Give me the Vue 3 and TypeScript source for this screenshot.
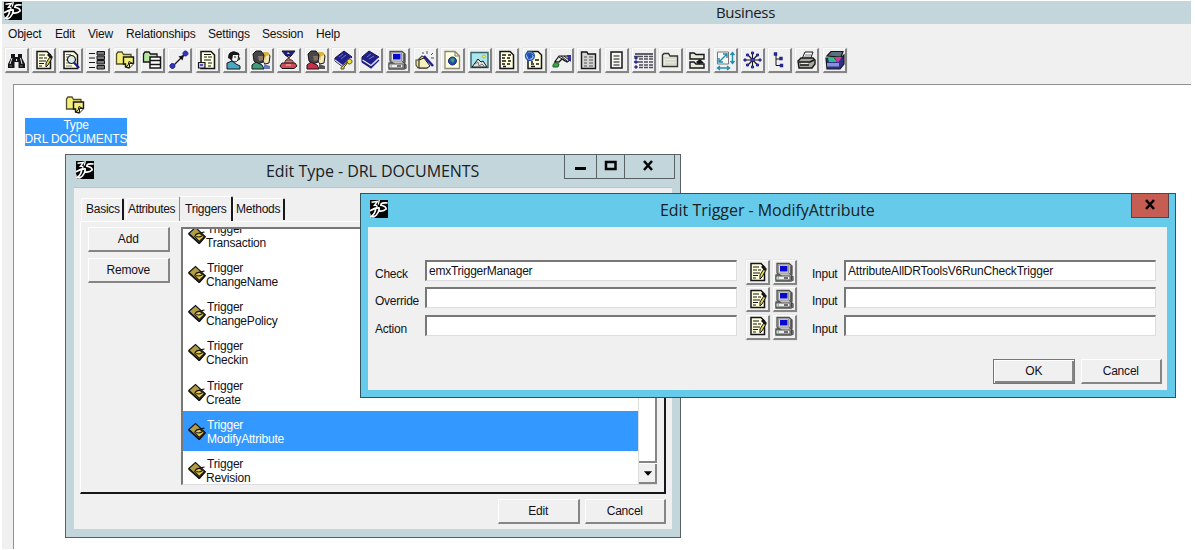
<script setup lang="ts">
import { h } from 'vue'

type Layer = [d: string, fill: string, stroke?: string, width?: number]

const ink = '#16161a'
const cream = '#ffffdc'
const yellow = '#f4ef7a'
const navy = '#20208c'

const page: Layer = ['M5 3.500H15L18.500 7V20.500H5Z', cream, ink, 1.5]

const glyphs: Record<string, Layer[]> = {
  logo: [
    ['M0 0H24V24H0Z', '#050505'],
    ['M2 3L10 2L6 7Q11 6.500 8.500 10.500L4 12', 'none', '#fff', 1.8],
    ['M0 14.500Q7 10 12 10.500Q13 15 8.500 20Q5 23.500 2 21.500Q7 18 7.500 12', 'none', '#fff', 2.3],
    ['M23.500 4Q14 3 14.500 7Q22 8.500 21.500 12Q18 15.500 12 14.500', 'none', '#fff', 2.3],
    ['M12.500 0L11 6M0 22.500H6M0 18V24', 'none', '#fff', 1.6],
  ],
  trigger: [
    ['M1 10L10 2L23 14L15 23Z', '#b39d42', ink, 1.6],
    ['M1 10.500L15 23L23 14', 'none', ink, 2.4],
    ['M9 14Q11 9 16 10L22 14L15 20.500Z', '#e6cb42', ink, 1.4],
    ['M11 14Q15 15.500 19 13M15 9.500L22 8', 'none', ink, 1.4],
  ],
  find: [
    ['M6 6H10V9H13V6H17V10L20 16V20H13.500V14H9.500V20H3V16L6 10Z', ink],
    ['M7 10L5 16M15.500 10L17 16M11.500 11V13', 'none', '#e5e5e5', 1],
    ['M4.500 18H7M15 18H17.500', 'none', '#777', 1],
  ],
  edit: [
    page,
    ['M7 7H13M7 10H11M12 10H15M7 13H14M7 15.500H12M7 18H10', 'none', ink, 1.1],
    ['M18.500 8L20 10L16 17L14 19V15Z', '#e5d94b', ink, 1],
    ['M16 6L20 10', 'none', ink, 2.8],
  ],
  inspect: [
    page,
    ['M7 6.500H12M7 9H9M7 12H9M7 15H11M7 18H13', 'none', '#777', 1],
    ['M12.500 7.500A4 4 0 1 1 12.400 7.500Z', '#dcebf0', ink, 1.1],
    ['M15 14.500L20 20', 'none', navy, 2.4],
  ],
  details: [
    ['M3 5.500H9M3 10H9M3 14.500H9M3 19.500H9', 'none', ink, 1.2],
    ['M11 3.500H18.500V7H11ZM11 8H18.500V11.500H11ZM11 12.500H18.500V16H11ZM11 17.500H18.500V21H11Z', '#777', ink, 1],
  ],
  types: [
    ['M2.500 6L4 4H8L9.500 6.500H17V16H2.500Z', yellow, '#55502c', 1.3],
    ['M9.500 9H19.500V15.500L15 20L11.500 19V16H9.500Z', yellow, ink, 1.4],
    ['M11.500 19Q15 18 15 13.500L19 15.500M15.500 19.500V15.500H19.500', cream, ink, 1],
  ],
  structure: [
    ['M2.500 6L4 4H8L9.500 6H16V14H2.500Z', '#b4e5a1', ink, 1.3],
    ['M9 9H19.500V20H9Z', '#fff', ink, 1.5],
    ['M9 12.500H19.500M9 16.500H19.500', 'none', ink, 1.3],
  ],
  connect: [
    ['M5 18L17 6', 'none', ink, 1.3],
    ['M10.500 8.500L16 7L14.500 12.500Z', ink],
    ['M4.500 15.500A2.500 2.500 0 1 1 4.400 15.500ZM17.500 3A2.500 2.500 0 1 1 17.400 3Z', '#3434bd', navy, 1],
  ],
  format: [
    page,
    ['M8 6.500H15M8 9H11M12 9H16M8 12H15M12 15H16M12 18H15', 'none', ink, 1],
    ['M2.500 14.500H9V20H2.500Z', '#d7d7e9', ink, 1.2],
    ['M4 16H7V18H4Z', '#5252c6'],
  ],
  person: [
    ['M7 8Q7 3.500 12 4L16 6L15 12Q14 14 11 14L8 12Z', '#f3f0e8', ink, 1],
    ['M5 10Q5 3 11 3.500L16 5V7L10 7L9 12Z', ink],
    ['M4 15L9 13L13 16L17 18V21H4Z', '#49a8c4', ink, 1],
    ['M15 8L17 11L15 12', 'none', ink, 1],
    ['M11 9H13', 'none', ink, 1],
  ],
  group: [
    ['M13 5H18L20 8L19 15L15 16L12 12Z', '#f2e6b9', ink, 1],
    ['M13 4H18L20 7L16 8L15 13Z', '#d5b53f'],
    ['M3 6L6 3H11L14 7L13 14L8 16L4 13Z', '#474749', ink, 1],
    ['M8 8H13V12L9 13Z', '#8a7a73'],
    ['M2 17L6 14L12 17L14 21H2Z', '#3e9f7c', ink, 1],
    ['M14 16L20 18V21H14Z', '#6978bb'],
  ],
  role: [
    ['M5 3H18L14 8H9Z', navy, ink, 1],
    ['M11 4L13 6H10Z', '#e5c74b'],
    ['M10 8L15 14M14 8L8 13', 'none', ink, 1],
    ['M8 16Q7 11 12 12Q17 11 16 16Z', '#dd7272', '#642c2c', 1],
    ['M3 18L5 15H18L20 18L17 20.500H5Z', '#cc4d55', ink, 1],
    ['M9 17H14', 'none', '#ffb1a6', 1.2],
  ],
  assoc: [
    ['M13 5H18L20 8L19 15L15 16L12 12Z', '#f2e6b9', ink, 1],
    ['M13 4H18L20 7L16 8L15 13Z', '#d5b53f'],
    ['M3 6L6 3H11L14 7L13 14L8 16L4 13Z', '#474749', ink, 1],
    ['M8 8H13V12L9 13Z', '#8a6a63'],
    ['M2 17L6 14L12 17L14 21H2Z', '#d02d48', ink, 1],
    ['M14 16L20 18V21H14Z', '#525257'],
  ],
  policy: [
    ['M3 10L12 3L20 9L11 19L3 13Z', navy, '#12123d', 1],
    ['M3 12L11 18L19 10', 'none', '#d8d8e8', 1.2],
    ['M7 9L11 6M9 11L14 7', 'none', '#7373bc', 1],
    ['M17.500 11A2.500 2.500 0 1 1 17.400 11ZM15.500 14L9 19.500V21H12V19L14 17Z', '#e8df49', '#4b471c', 1],
  ],
  book: [
    ['M3 9L10 3L20 9L12 19L3 14Z', navy, '#12123d', 1],
    ['M3.500 12L12 17.500L20 10', 'none', '#e6e6ef', 1.3],
    ['M3 14L12 20L20 12', 'none', navy, 1.3],
    ['M8 9L12 6M10 11L15 8', 'none', '#7777be', 1],
  ],
  computer: [
    ['M4 3.500H16L19 6V14H17L20 17V20L18 21H3V15H7L4 13Z', '#c0c0c0', '#50504c', 1.3],
    ['M5.500 5H15.500V13H5.500Z', '#e6e6e6', '#999', 1],
    ['M7 6H14.500V11.500H7Z', '#0808d0'],
    ['M3 16H17V20H3Z', '#eee', '#555', 1],
    ['M11 18H15M18 6V13M18.500 16V20', 'none', '#444', 1.4],
    ['M4.500 18H6', 'none', '#32a052', 1.2],
  ],
  wizard: [
    ['M2 12H4L8 8L13 11V20H4L2 17Z', '#e6e2a6', '#4c4a2d', 1.1],
    ['M5 12L10 10L16 18L13 20H5Z', '#f4f0bd', ink, 1],
    ['M10 8L19 18', 'none', navy, 2.5],
    ['M8 5H10M13 3V6M17 7L19 5M17 10H20', 'none', '#4b4b61', 1],
  ],
  web: [
    ['M4 3.500H14L18.500 8V20.500H4Z', cream, '#8b8972', 1.3],
    ['M14 4V8H18', 'none', '#777', 1],
    ['M11.500 9A4 4 0 1 1 11.400 9Z', '#264baf', navy, 1],
    ['M11 10L14 11L12 15L9 12Z', '#38a46c'],
  ],
  image: [
    ['M3 4.500H20V19.500H3Z', '#a9e7ef', '#36636c', 1.4],
    ['M4 19L10 11L13 14L15 13L19 19Z', '#e2e5df', ink, 1],
    ['M7 16L10 14L11 18L14 16L16 18', 'none', '#777', 1],
    ['M16 7A1.500 1.500 0 1 1 15.900 7Z', '#fff158', '#c0a72c', 1],
  ],
  report: [
    page,
    ['M7 7H11M13 7H16M7 10H10M12 10H15M7 13H11M13 13H16M7 16H10M12 16H15M8 18.500H11', 'none', ink, 1.4],
  ],
  webreport: [
    page,
    ['M8 14H10M12 12H16M8 16H11M13 16H16M8 18.500H12', 'none', ink, 1.3],
    ['M7 3.500A4.500 4.500 0 1 1 6.900 3.500Z', '#84c5e8', '#2852a7', 1.3],
    ['M4 6L8 5L9 9L6 11ZM9 6L11 8', '#254fae', '#254fae', 1],
  ],
  hand: [
    ['M3 17L5 14L9 16L8 19H3Z', '#37aa42', '#1f5c27', 1],
    ['M5 13.500L9 8L18 8L20 12L17 14L12 11L9 14Z', '#e4e4df', ink, 1.2],
    ['M9 9L15 13M11 8L17 13M14 8L19 12', 'none', ink, 1],
    ['M17 7H21V14L18 11Z', '#32329a'],
  ],
  folderlist: [
    ['M4.500 4H10L11 6H18.500V20.500H4.500Z', '#d4d4d1', ink, 1.4],
    ['M7 9H10M12 9H16M7 12H10M12 12H16M7 15H10M12 15H16M7 18H10M12 18H16', 'none', '#555', 1.2],
  ],
  document: [
    ['M6 4H17V20H6Z', '#f8f8f2', ink, 1.5],
    ['M8.500 8H14.500M8.500 11H14.500M8.500 14H14.500M8.500 17H14.500', 'none', ink, 1.2],
  ],
  table: [
    ['M3 6H21', 'none', '#333', 1.5],
    ['M2 8.500H21M7 11H21M2 14H21M7 17H21M7 19.500H21', 'none', '#4d4d5c', 1.4],
    ['M11.500 7V21M16.500 7V21', 'none', '#eee', 1],
    ['M3 9H5V11H3ZM3 13H5V15H3ZM3 18H5V20H3Z', '#5050ae', navy, 1],
  ],
  folder: [
    ['M3.500 18.500V7L5 5.500H9.500L11 8H18.500V18.500Z', '#e9e9dd', '#343432', 1.4],
    ['M5 10H18M6 13H17M6 16H17', 'none', '#c6c6bb', 1],
  ],
  folders: [
    ['M4 11V5H8L10 6.500H18V11ZM4 20V14H8L10 16H18V20Z', '#e8e8d6', ink, 1.4],
    ['M10 14L14 11L18 15L12 16Z', ink],
  ],
  resize: [
    ['M3.500 4H14.500V16H3.500Z', '#f7f8f8', '#777', 1],
    ['M5 14L13 6M9 6H13V10M5 10V14H9M18.500 4.500V15.500M16.500 7L18.500 4.500L20.500 7M16.500 13L18.500 15.500L20.500 13M4 20H15M6 18L3.500 20L6 22M13 18L15.500 20L13 22', 'none', '#228caf', 1.4],
  ],
  star: [
    ['M4 12H18M11.500 5V19M7 7L16.500 17M16.500 7L7 17', 'none', ink, 1.1],
    ['M10 10.500H13V13.500H10ZM3 11H5V13H3ZM18 11H20V13H18ZM10.500 4H12.500V6H10.500ZM10.500 18H12.500V20H10.500ZM5.500 6H7.500V8H5.500ZM15.500 6H17.500V8H15.500ZM5.500 16H7.500V18H5.500ZM15.500 16H17.500V18H15.500Z', '#4d4daa', navy, 1],
  ],
  tree: [
    ['M8 7V17.500H14M8 11H13', 'none', ink, 1],
    ['M6.500 5H8.500V7H6.500ZM12 9.500H14V11.500H12ZM12.500 16.500H14.500V18.500H12.500Z', '#6666b4', navy, 1.4],
  ],
  printer: [
    ['M7 11L10 4H18L15 12Z', '#fff', ink, 1],
    ['M10 7H16M9 9H15', 'none', '#777', 1],
    ['M3 13L6 10H18L20 12V16L17 20H4Z', '#a8a89c', ink, 1.4],
    ['M4 14H15L19 12M5 17H14', 'none', ink, 1.6],
    ['M6 15.500H13', 'none', '#f0ead0', 1.1],
  ],
  archive: [
    ['M4 8L8 3.500H20L18 9Z', '#58717d', ink, 1.2],
    ['M3 10H18L21 7V16L17 21H4Z', '#30308b', ink, 1.2],
    ['M5 10H11L14 14H6Z', '#31bd84'],
    ['M11 9H19L15 14.500Z', '#db3993'],
    ['M4 15H16V18.500H4Z', '#8792d9'],
  ],
  minimize: [['M6 14.500H17', 'none', '#050505', 3]],
  maximize: [['M7 8H16.500V15H7Z', 'none', '#050505', 2.5]],
  close: [['M8 7L16 16M16 7L8 16', 'none', '#050505', 2.6]],
  down: [['M6.500 9.500H17.500L12 15.500Z', '#050505']],
}

const Glyph = (props: { name: string }) =>
  h(
    'svg',
    { viewBox: '0 0 24 24', 'aria-hidden': 'true' },
    glyphs[props.name].map(([d, fill, stroke, width]) =>
      h('path', { d, fill, stroke: stroke ?? 'none', 'stroke-width': width ?? 0 }),
    ),
  )
Glyph.props = ['name']

const menus = ['Object', 'Edit', 'View', 'Relationships', 'Settings', 'Session', 'Help']
const tools = [
  'find', 'edit', 'inspect', 'details', 'types', 'structure', 'connect', 'format', 'person', 'group', 'role',
  'assoc', 'policy', 'book', 'computer', 'wizard', 'web', 'image', 'report', 'webreport', 'hand', 'folderlist',
  'document', 'table', 'folder', 'folders', 'resize', 'star', 'tree', 'printer', 'archive',
]
const tabs = ['Basics', 'Attributes', 'Triggers', 'Methods']
const triggers = ['Transaction', 'ChangeName', 'ChangePolicy', 'Checkin', 'Create', 'ModifyAttribute', 'Revision']
const rows = [
  { label: 'Check', program: 'emxTriggerManager', input: 'AttributeAllDRToolsV6RunCheckTrigger' },
  { label: 'Override', program: '', input: '' },
  { label: 'Action', program: '', input: '' },
]
</script>

<template>
  <main class="desktop">
    <header class="titlebar">
      <Glyph name="logo" class="logo" />
      <h1 class="title">Business</h1>
    </header>
    <nav class="menubar">
      <span v-for="m in menus" :key="m" :class="['menu', m.toLowerCase()]">{{ m }}</span>
    </nav>
    <div class="toolbar">
      <button v-for="t in tools" :key="t" class="tool" :aria-label="t"><Glyph :name="t" /></button>
    </div>
    <section class="workspace">
      <div class="object">
        <Glyph name="types" class="object-icon" />
        <div class="object-name"><span>Type</span><span class="caps">DRL DOCUMENTS</span></div>
      </div>
    </section>

    <section class="window type-window">
      <header class="window-bar">
        <Glyph name="logo" class="logo" />
        <h2 class="title">Edit Type - DRL DOCUMENTS</h2>
        <div class="controls">
          <button class="control min" aria-label="Minimize"><Glyph name="minimize" /></button>
          <button class="control max" aria-label="Maximize"><Glyph name="maximize" /></button>
          <button class="control quit" aria-label="Close"><Glyph name="close" /></button>
        </div>
      </header>
      <div class="client">
        <div class="tabs">
          <div v-for="t in tabs" :key="t" :class="['tab', t.toLowerCase()]"><span>{{ t }}</span></div>
        </div>
        <div class="panel">
          <div class="side">
            <button class="push">Add</button>
            <button class="push">Remove</button>
          </div>
          <div class="list">
            <div class="items">
              <div v-for="t in triggers" :key="t" :class="['item', { selected: t === 'ModifyAttribute' }]">
                <Glyph name="trigger" class="item-icon" />
                <div class="item-text"><span>Trigger</span><span class="item-name">{{ t }}</span></div>
              </div>
            </div>
            <div class="scrollbar">
              <div class="thumb"></div>
              <div class="arrow"><Glyph name="down" /></div>
            </div>
          </div>
        </div>
        <footer class="actions">
          <button class="push">Edit</button>
          <button class="push">Cancel</button>
        </footer>
      </div>
    </section>

    <section class="window trigger-window">
      <header class="window-bar">
        <Glyph name="logo" class="logo" />
        <h2 class="title">Edit Trigger - ModifyAttribute</h2>
        <button class="control quit red" aria-label="Close"><Glyph name="close" /></button>
      </header>
      <div class="client">
        <div class="form">
          <div v-for="r in rows" :key="r.label" class="row">
            <span class="label">{{ r.label }}</span>
            <div class="field">{{ r.program }}</div>
            <div class="pair">
              <button class="tool" aria-label="Edit program"><Glyph name="edit" /></button>
              <button class="tool" aria-label="Choose program"><Glyph name="computer" /></button>
            </div>
            <span class="label input-label">Input</span>
            <div class="field wide">{{ r.input }}</div>
          </div>
        </div>
        <footer class="actions">
          <button class="push default">OK</button>
          <button class="push">Cancel</button>
        </footer>
      </div>
    </section>
  </main>
</template>

<style>
body { margin: 0; background: #fff; overflow: hidden; }
</style>

<style scoped>
* { box-sizing: border-box; }
.desktop {
  position: relative; width: 1195px; height: 550px; padding: 1px 4px 1px 2px; overflow: hidden;
  display: flex; flex-direction: column; background: #fff; color: #111118;
  font: 12px/14px "Liberation Sans", Arial, sans-serif; letter-spacing: -0.2px;
}
button {
  padding: 0; margin: 0; border: 0; background: #f0f0f0; color: inherit; font: inherit; letter-spacing: inherit;
  display: flex; align-items: center; justify-content: center;
}
svg { display: block; overflow: hidden; flex: none; }
.titlebar { height: 23px; flex: none; display: flex; background: #c3d6dc; padding: 1px 0 0 2px; }
.logo { width: 18px; height: 18px; }
.title {
  margin: 0; font: 400 16px/22px "Open Sans", "Noto Sans", sans-serif; letter-spacing: -0.04px;
  color: #172024; white-space: nowrap;
}
.titlebar .title { margin-left: 694px; line-height: 20px; font-size: 15px; letter-spacing: -0.35px; }
.menubar { height: 20px; flex: none; display: flex; background: #f0f0f0; padding: 3px 0 0 6px; }
.menu { white-space: nowrap; }
.object { width: 47px; }
.menu.edit { width: 33px; }
.view { width: 38px; }
.relationships { width: 82px; }
.settings { width: 54px; }
.session { width: 54px; }
.toolbar { height: 40px; flex: none; display: flex; gap: 3.270px; padding: 4px 0 0 2.700px; background: #f0f0f0; }
.tool {
  width: 24px; height: 25px; flex: none; border: 1px solid #fff; border-right: 2px solid #858585;
  border-bottom: 2px solid #858585; box-shadow: 0 0 0 .5px #ddd;
}
.tool svg { width: 24px; height: 24px; margin: -3px -2px -2px -1px; }
.workspace {
  flex: 1; margin-left: 0; border-left: 11px solid #f0f0f0; background: #fff;
  box-shadow: inset 1px 1px #919191; padding: 9px 0 0 12px;
}
.workspace .object { width: 102px; display: flex; flex-direction: column; align-items: center; }
.object-icon { width: 24px; height: 24px; margin-bottom: 1px; }
.object-name {
  width: 102px; height: 28px; background: #3398ff; color: #fff; display: flex; flex-direction: column;
  align-items: center; white-space: nowrap; padding-top: 1px; line-height: 13.500px;
}
.caps { letter-spacing: -0.1px; }
.window { position: absolute; border: 1px solid #596165; display: flex; flex-direction: column; }
.window-bar { flex: none; display: flex; }
.client { flex: 1; background: #f0f0f0; display: flex; flex-direction: column; }
.type-window { left: 65px; top: 154px; width: 616px; height: 384px; background: #c3d6dc; padding: 0 8px 8px; }
.type-window .window-bar { height: 32px; }
.type-window .logo { margin: 6px 0 0 2px; }
.type-window .title { margin: 5px 0 0 172px; width: 298px; flex: none; }
.controls { display: flex; height: 24px; margin-right: -4px; }
.type-window .client { padding: 7px 6px 0; border-top: 1px solid #b5c7cc; }
.control { height: 24px; border: 1px solid #596165; border-top: 0; border-left: 0; background: transparent; }
.control svg { width: 24px; height: 24px; margin-top: -1px; }
.min { width: 33px; border-left: 1px solid #596165; }
.max { width: 28px; }
.quit { width: 50px; padding-right: 3px; }
.tabs { height: 26px; flex: none; display: flex; align-items: flex-end; position: relative; }
.tab {
  height: 22px; padding: 3px 0 0 4px; border-top: 1px solid #fff; border-left: 1px solid #fff;
  border-right: 2px solid #17171b; border-radius: 2px 2px 0 0; white-space: nowrap; letter-spacing: -0.25px;
  margin-bottom: 1px;
}
.basics { margin-left: 1px; width: 43px; }
.attributes { margin-left: 2px; width: 53px; padding-left: 1px; border-right-width: 0; letter-spacing: -0.35px; }
.triggers { width: 54px; height: 25px; padding: 5px 0 0 5px; background: #f0f0f0; border-left-color: #888; margin-bottom: 0; }
.methods { width: 52px; padding-left: 2px; }
.panel {
  width: 586px; height: 273px; flex: none; display: flex; gap: 12px; padding: 5px 8px 0 7px;
  border-top: 1px solid #fff; border-left: 1px solid #fff; border-right: 2px solid #17171b; border-bottom: 2px solid #17171b;
}
.side { width: 81px; flex: none; display: flex; flex-direction: column; gap: 6px; }
.push {
  width: 81.500px; height: 25px; flex: none; border: 1px solid #fff; border-right: 2px solid #858585;
  border-bottom: 2px solid #858585; white-space: nowrap;
}
.list {
  width: 476px; height: 258px; flex: none; display: flex; background: #fff; overflow: hidden;
  border-top: 2px solid #777; border-left: 2px solid #777; border-bottom: 1px solid #ddd;
}
.items { width: 455px; flex: none; }
.item { height: 39.300px; display: flex; padding: 6.500px 0 0 5px; }
.item:first-child { margin-top: -14px; }
.item-icon { width: 18px; height: 18px; margin-top: 4px; }
.item-text { display: flex; flex-direction: column; padding-left: 1px; white-space: nowrap; }
.item-name { margin-left: -1px; }
.selected { background: #3398ff; color: #fff; }
.selected .item-name { margin-left: 0; }
.scrollbar { width: 19px; display: flex; flex-direction: column; gap: 1px; border-left: 1px solid #ddd; }
.thumb { height: 234px; border-right: 2px solid #858585; border-bottom: 2px solid #858585; }
.arrow { height: 20px; background: #f0f0f0; border-right: 2px solid #858585; border-bottom: 2px solid #858585; }
.arrow svg { width: 18px; height: 18px; }
.actions { display: flex; justify-content: flex-end; gap: 5px; }
.type-window .actions { padding-top: 5px; }
.trigger-window {
  left: 360px; top: 193px; width: 816px; height: 205px; background: #66cbeb; border-color: #31535e; padding: 0 8px 7px 7px;
}
.trigger-window .window-bar { height: 33px; }
.trigger-window .logo { margin: 6px 0 0 2px; }
.trigger-window .title { margin: 5px 0 0 272px; width: 471px; flex: none; }
.red { width: 38px; flex: none; background: #c65d53; border: 1px solid #5a4045; border-top: 0; padding: 0; }
.form { padding: 33px 0 0 7px; display: flex; flex-direction: column; gap: 2.300px; }
.row { height: 25px; display: flex; }
.label { width: 50px; flex: none; padding-top: 7px; letter-spacing: -0.25px; white-space: nowrap; }
.field {
  width: 312px; height: 21px; flex: none; background: #fff; border: 1px solid #ddd; border-top: 2px solid #777;
  border-left: 2px solid #777; padding: 2px 2px; white-space: nowrap; letter-spacing: -0.25px;
}
.wide { letter-spacing: -0.18px; }
.pair { display: flex; gap: 3px; width: 75px; padding-left: 9px; flex: none; }
.input-label { width: 32px; }
.trigger-window .actions { margin: 19px 5px 0 0; gap: 6px; }
.default { border: 1px solid #777; box-shadow: inset 1px 1px #fff, inset -2px -2px #858585; }
</style>
